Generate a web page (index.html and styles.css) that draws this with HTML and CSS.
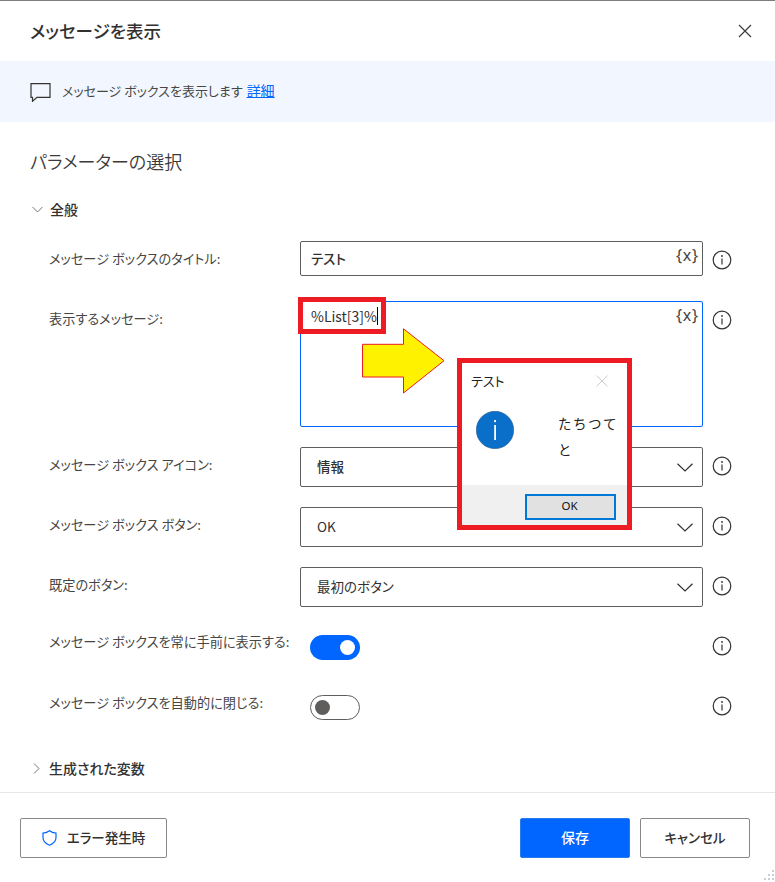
FILE: index.html
```html
<!DOCTYPE html>
<html lang="ja">
<head>
<meta charset="utf-8">
<title>メッセージを表示</title>
<link rel="stylesheet" href="styles.css">
</head>
<body>
<div class="app">
  <header class="header">
    <h1 class="title">メッセージを表示</h1>
    <svg class="close" width="14" height="14" viewBox="0 0 14 14"><path d="M1 1l12 12M13 1L1 13" stroke="#3b3b3b" stroke-width="1.2" fill="none"/></svg>
  </header>
  <div class="banner">
    <svg class="banner-icon" width="21" height="19" viewBox="0 0 21 19"><path d="M1 .7h19v13.6H7l-4.5 4v-4H1z" fill="none" stroke="#333" stroke-width="1.2"/></svg>
    <span>メッセージ ボックスを表示します</span>
    <a class="link" href="#">詳細</a>
  </div>
  <main class="main">
    <h2 class="section-title">パラメーターの選択</h2>
    <div class="group-head">
      <svg width="11" height="7" viewBox="0 0 11 7"><path d="M.5 1l5 5 5-5" fill="none" stroke="#777" stroke-width="1"/></svg>
      <span>全般</span>
    </div>
    <div class="row row-first">
      <label class="label">メッセージ ボックスのタイトル:</label>
      <div class="field field-input"><span class="strong">テスト</span><span class="var">{x}</span></div>
      <svg class="info" width="20" height="20" viewBox="0 0 20 20"><circle cx="10" cy="10" r="8.8" fill="none" stroke="#333" stroke-width="1.2"/><circle cx="10" cy="6" r=".9" fill="#333"/><path d="M10 8.6v6" stroke="#333" stroke-width="1.2"/></svg>
    </div>
    <div class="row row-area">
      <label class="label">表示するメッセージ:</label>
      <div class="field field-area"><span class="typed">%List[3]%</span><span class="var">{x}</span></div>
      <svg class="info" width="20" height="20" viewBox="0 0 20 20"><circle cx="10" cy="10" r="8.8" fill="none" stroke="#333" stroke-width="1.2"/><circle cx="10" cy="6" r=".9" fill="#333"/><path d="M10 8.6v6" stroke="#333" stroke-width="1.2"/></svg>
    </div>
    <div class="row row-select">
      <label class="label">メッセージ ボックス アイコン:</label>
      <div class="field field-select"><span class="strong">情報</span><svg class="chev" width="16" height="9" viewBox="0 0 16 9"><path d="M.5.7L8 8l7.5-7.3" fill="none" stroke="#333" stroke-width="1.2"/></svg></div>
      <svg class="info" width="20" height="20" viewBox="0 0 20 20"><circle cx="10" cy="10" r="8.8" fill="none" stroke="#333" stroke-width="1.2"/><circle cx="10" cy="6" r=".9" fill="#333"/><path d="M10 8.6v6" stroke="#333" stroke-width="1.2"/></svg>
    </div>
    <div class="row row-select">
      <label class="label">メッセージ ボックス ボタン:</label>
      <div class="field field-select"><span>OK</span><svg class="chev" width="16" height="9" viewBox="0 0 16 9"><path d="M.5.7L8 8l7.5-7.3" fill="none" stroke="#333" stroke-width="1.2"/></svg></div>
      <svg class="info" width="20" height="20" viewBox="0 0 20 20"><circle cx="10" cy="10" r="8.8" fill="none" stroke="#333" stroke-width="1.2"/><circle cx="10" cy="6" r=".9" fill="#333"/><path d="M10 8.6v6" stroke="#333" stroke-width="1.2"/></svg>
    </div>
    <div class="row row-select">
      <label class="label">既定のボタン:</label>
      <div class="field field-select"><span>最初のボタン</span><svg class="chev" width="16" height="9" viewBox="0 0 16 9"><path d="M.5.7L8 8l7.5-7.3" fill="none" stroke="#333" stroke-width="1.2"/></svg></div>
      <svg class="info" width="20" height="20" viewBox="0 0 20 20"><circle cx="10" cy="10" r="8.8" fill="none" stroke="#333" stroke-width="1.2"/><circle cx="10" cy="6" r=".9" fill="#333"/><path d="M10 8.6v6" stroke="#333" stroke-width="1.2"/></svg>
    </div>
    <div class="row row-toggle">
      <label class="label">メッセージ ボックスを常に手前に表示する:</label>
      <div class="toggle-wrap"><span class="toggle toggle-on"></span></div>
      <svg class="info" width="20" height="20" viewBox="0 0 20 20"><circle cx="10" cy="10" r="8.8" fill="none" stroke="#333" stroke-width="1.2"/><circle cx="10" cy="6" r=".9" fill="#333"/><path d="M10 8.6v6" stroke="#333" stroke-width="1.2"/></svg>
    </div>
    <div class="row row-toggle row-toggle-2">
      <label class="label">メッセージ ボックスを自動的に閉じる:</label>
      <div class="toggle-wrap"><span class="toggle toggle-off"></span></div>
      <svg class="info" width="20" height="20" viewBox="0 0 20 20"><circle cx="10" cy="10" r="8.8" fill="none" stroke="#333" stroke-width="1.2"/><circle cx="10" cy="6" r=".9" fill="#333"/><path d="M10 8.6v6" stroke="#333" stroke-width="1.2"/></svg>
    </div>
    <div class="group-head group-vars">
      <svg width="7" height="11" viewBox="0 0 7 11"><path d="M1 .5l5 5-5 5" fill="none" stroke="#777" stroke-width="1"/></svg>
      <span>生成された変数</span>
    </div>
  </main>
  <footer class="footer">
    <button class="btn btn-error">
      <svg width="15" height="16" viewBox="0 0 15 16"><path d="M7.5.8c1.8 1.5 3.8 2.2 6.5 2.3v4.4c0 3.500-2.500 6-6.500 7.700C3.500 13.500 1 11 1 7.500V3.100C3.700 3 5.700 2.300 7.500.8z" fill="none" stroke="#0066ff" stroke-width="1.200"/></svg>
      <span>エラー発生時</span>
    </button>
    <div class="footer-right">
      <button class="btn btn-primary">保存</button>
      <button class="btn btn-cancel">キャンセル</button>
    </div>
  </footer>
  <svg class="grip" width="14" height="14" viewBox="0 0 14 14"><g fill="#c9ced6"><rect x="11" y="2" width="2" height="2"/><rect x="11" y="6" width="2" height="2"/><rect x="7" y="6" width="2" height="2"/><rect x="11" y="10" width="2" height="2"/><rect x="7" y="10" width="2" height="2"/><rect x="3" y="10" width="2" height="2"/></g></svg>

  <div class="callout-box"></div>
  <svg class="arrow" width="84" height="67" viewBox="0 0 84 67"><path d="M.5 16.300h41V.8L82 32.700 41.500 65V49H.500z" fill="#fff200" stroke="#ed1c24" stroke-width="1"/></svg>
  <div class="dialog">
    <div class="dialog-head">
      <span>テスト</span>
      <svg width="12" height="12" viewBox="0 0 12 12"><path d="M.5.5l11 11M11.500.5l-11 11" stroke="#ccc" stroke-width="1" fill="none"/></svg>
    </div>
    <div class="dialog-body">
      <svg class="dialog-icon" width="38" height="38" viewBox="0 0 38 38"><circle cx="19" cy="19" r="18.700" fill="#0a6fc9" stroke="#2a5d8f" stroke-width=".6"/><rect x="18.200" y="9" width="1.800" height="2.200" fill="#fff"/><rect x="18.200" y="14" width="1.800" height="15" fill="#fff"/></svg>
      <p class="dialog-text">たちつて<br>と</p>
    </div>
    <div class="dialog-foot"><button class="dialog-ok">OK</button></div>
  </div>
</div>
</body>
</html>
```
FILE: styles.css
```css
* { box-sizing: border-box; }
html, body { margin: 0; padding: 0; background: #fff; }
body {
  font-family: "Noto Sans CJK JP", "Noto Sans", sans-serif;
  font-feature-settings: "palt";
  color: #323130;
  font-size: 14px;
}
.app {
  position: relative;
  width: 775px;
  height: 882px;
  overflow: hidden;
  border-top: 1px solid #7d7d7d;
  display: flex;
  flex-direction: column;
}
.header {
  height: 60px;
  padding: 0 23px 0 30px;
  display: flex;
  align-items: center;
  justify-content: space-between;
}
.title { margin: 0; font-size: 17.500px; font-weight: 500; line-height: 1; }
.banner {
  height: 61px;
  background: #f2f6fe;
  padding: 0 0 0 30px;
  display: flex;
  align-items: center;
  font-size: 13px;
  color: #484644;
}
.banner span, .link { margin-bottom: 3px; }
.banner-icon { margin-right: 11px; margin-top: 2px; }
.link { color: #0066ff; margin-left: 4px; font-size: 14px; }
.main { flex: 1; padding-left: 30px; }
.section-title {
  margin: 27px 0 0;
  font-size: 18px;
  font-weight: 350;
  line-height: 24px;
  color: #3b3a39;
}
.group-head {
  display: flex;
  align-items: center;
  font-size: 14px;
  font-weight: 500;
  line-height: 20px;
  margin-top: 26px;
}
.group-head svg { margin: 0 7px 0 2px; }
.row {
  display: grid;
  grid-template-columns: 251px 403px 30px;
  margin: 20px 0 0 19px;
  align-items: start;
}
.row-first { margin-top: 22px; }
.row-area { margin-top: 25px; }
.label { font-size: 13.200px; line-height: 20px; padding-top: 8px; color: #484644; white-space: nowrap; }
.field {
  position: relative;
  width: 403px;
  border: 1px solid #605e5c;
  border-radius: 2px;
  padding-left: 10px;
  background: #fff;
  display: flex;
  font-size: 13.500px;
}
.field-input { height: 35px; align-items: center; padding-bottom: 2px; }
.field-area { height: 126px; border-color: #0066ff; padding-top: 4px; align-items: flex-start; font-size: 14px; }
.field-select { height: 40px; align-items: center; padding-left: 16px; padding-bottom: 2px; }
.strong { font-weight: 500; }
.typed { border-right: 1px solid #000; line-height: 18px; margin-top: 1px; font-weight: 400; }
.var {
  position: absolute;
  top: 3px;
  right: 3px;
  font-size: 16px;
  letter-spacing: .8px;
  line-height: 20px;
  font-family: "Noto Sans", sans-serif;
  color: #444;
}
.chev { position: absolute; right: 9px; top: 15px; }
.info { margin: 9px 0 0 9px; justify-self: start; }
.row-toggle { margin-top: 28px; height: 26px; }
.row-toggle-2 { margin-top: 34px; }
.row-toggle .label { padding-top: 0; line-height: 18px; margin-top: -2px; }
.row-toggle-2 .label { margin-top: -1px; }
.row-toggle .info { margin-top: 1px; }
.toggle-wrap { padding-left: 10px; }
.toggle {
  display: block;
  position: relative;
  width: 50px;
  height: 25px;
  border-radius: 13px;
}
.toggle-on { background: #0066ff; }
.toggle-on::after {
  content: "";
  position: absolute;
  right: 5px;
  top: 5px;
  width: 15px;
  height: 15px;
  border-radius: 50%;
  background: #fff;
}
.toggle-off { border: 1px solid #605e5c; background: #fff; }
.toggle-off::after {
  content: "";
  position: absolute;
  left: 4px;
  top: 4px;
  width: 15px;
  height: 15px;
  border-radius: 50%;
  background: #605e5c;
}
.group-vars { margin-top: 37px; }
.group-vars svg { margin: 0 9px 0 3px; }
.footer {
  height: 90px;
  border-top: 1px solid #e6e6e6;
  padding: 25px 25px 0 20px;
  display: flex;
  justify-content: space-between;
  align-items: flex-start;
}
.footer-right { display: flex; gap: 10px; }
.btn {
  height: 40px;
  border-radius: 2px;
  font-family: inherit;
  font-feature-settings: "palt";
  font-size: 13.500px;
  font-weight: 500;
  color: #323130;
  background: #fff;
  border: 1px solid #8a8886;
  display: flex;
  align-items: center;
  justify-content: center;
  padding: 0 0 2px;
}
.btn svg { margin-top: 2px; }
.btn-error { width: 147px; gap: 10px; }
.btn-primary { width: 110px; background: #0066ff; border-color: #2a7bf0; color: #fff; font-size: 14px; }
.btn-cancel { width: 110px; }
.grip { position: absolute; right: 0; bottom: 0; }
.callout-box {
  position: absolute;
  left: 298px;
  top: 296px;
  width: 88px;
  height: 37px;
  border: 5px solid #ed1c24;
}
.arrow { position: absolute; left: 361.500px; top: 327px; }
.dialog {
  position: absolute;
  left: 457px;
  top: 357px;
  width: 175px;
  height: 172px;
  border: 5px solid #ed1c24;
  background: #fff;
  display: flex;
  flex-direction: column;
}
.dialog-head {
  height: 35px;
  margin-bottom: 2px;
  padding: 0 19px 0 9px;
  display: flex;
  align-items: center;
  justify-content: space-between;
  font-size: 13px;
  color: #222;
}
.dialog-body { flex: 1; position: relative; padding: 11px 0 0 14px; display: flex; }
.dialog-icon { display: block; }
.dialog-text {
  margin: -1px 0 0 44px;
  font-size: 13.500px;
  line-height: 26px;
  letter-spacing: 1.500px;
  color: #222;
  font-feature-settings: normal;
}
.dialog-foot {
  height: 40px;
  background: #f0f0f0;
  padding: 9px 11px 0 0;
  display: flex;
  justify-content: flex-end;
  align-items: flex-start;
}
.dialog-ok {
  width: 91px;
  height: 26px;
  background: #e1e1e1;
  border: 2px solid #0078d7;
  font-family: "Noto Sans", sans-serif;
  font-size: 11.500px;
  color: #111;
  padding: 0 2px 3px 0;
}
```
